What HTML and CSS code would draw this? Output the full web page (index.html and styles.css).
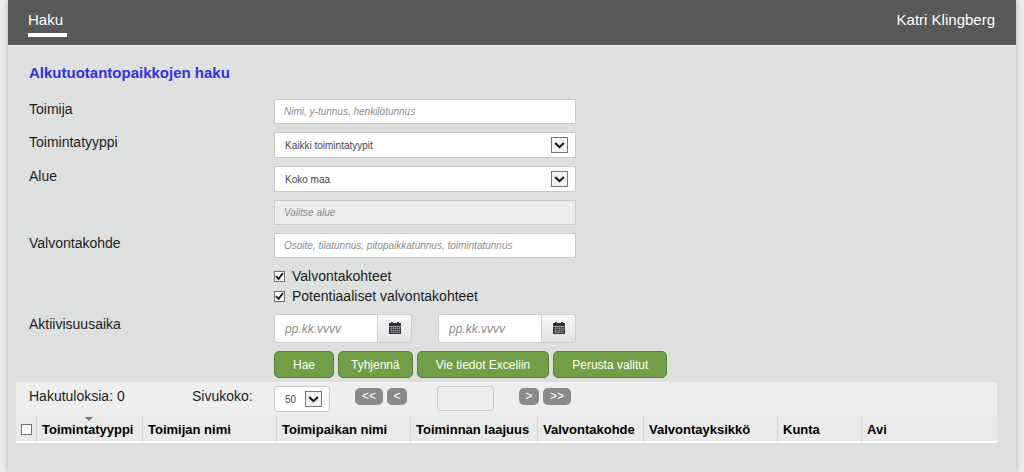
FILE: index.html
```html
<!DOCTYPE html>
<html lang="fi">
<head>
<meta charset="utf-8">
<title>Alkutuotantopaikkojen haku</title>
<link rel="stylesheet" href="styles.css">
</head>
<body>
<svg class="defs" aria-hidden="true">
  <symbol id="chevron" viewBox="0 0 15 14"><path d="M3.2 5 L7.5 9.2 L11.8 5" fill="none" stroke="#111" stroke-width="2"/></symbol>
  <symbol id="tick" viewBox="0 0 11 11"><path d="M2 5 L4.5 8 L9 2" fill="none" stroke="#111" stroke-width="1.8"/></symbol>
  <symbol id="calendar" viewBox="0 0 12 12">
    <path d="M0 1h2V0h2v1h4V0h2v1h2v3H0z" fill="#2e3033"/>
    <path d="M0 4.6h12V12H0z" fill="#303338"/>
    <path d="M1 6.5h10M1 8.5h10M1 10.5h10M2.5 5v6M4.5 5v6M6.5 5v6M8.5 5v6M10.5 5v6" stroke="#a5a8aa" stroke-width=".5"/>
  </symbol>
</svg>
<div class="page">
  <header class="topbar">
    <nav><a class="nav-link" href="#">Haku</a></nav>
    <span class="user">Katri Klingberg</span>
  </header>
  <main>
    <form class="search">
      <h1 class="title">Alkutuotantopaikkojen haku</h1>
      <div class="row">
        <label class="label" for="toimija">Toimija</label>
        <input class="field wide" id="toimija" type="text" placeholder="Nimi, y-tunnus, henkilötunnus">
      </div>
      <div class="row">
        <label class="label" for="tyyppi">Toimintatyyppi</label>
        <div class="select wide">
          <select id="tyyppi"><option>Kaikki toimintatyypit</option></select>
          <svg class="arrow"><use href="#chevron"/></svg>
        </div>
      </div>
      <div class="row">
        <label class="label" for="alue">Alue</label>
        <div class="select wide">
          <select id="alue"><option>Koko maa</option></select>
          <svg class="arrow"><use href="#chevron"/></svg>
        </div>
      </div>
      <div class="row">
        <span></span>
        <input class="field wide" type="text" placeholder="Valitse alue" aria-label="Valitse alue" disabled>
      </div>
      <div class="row">
        <label class="label" for="kohde">Valvontakohde</label>
        <input class="field wide" id="kohde" type="text" placeholder="Osoite, tilatunnus, pitopaikkatunnus, toimintatunnus">
      </div>
      <div class="row">
        <span></span>
        <div>
          <label class="check"><span class="box"><input type="checkbox" checked><svg class="tick"><use href="#tick"/></svg></span>Valvontakohteet</label>
          <label class="check"><span class="box"><input type="checkbox" checked><svg class="tick"><use href="#tick"/></svg></span>Potentiaaliset valvontakohteet</label>
        </div>
      </div>
      <div class="row">
        <label class="label" for="alku">Aktiivisuusaika</label>
        <div class="dates wide">
          <div class="date">
            <input id="alku" type="text" placeholder="pp.kk.vvvv">
            <button type="button" aria-label="Valitse alkupäivä"><svg class="calendar"><use href="#calendar"/></svg></button>
          </div>
          <div class="date">
            <input type="text" placeholder="pp.kk.vvvv" aria-label="Loppupäivä">
            <button type="button" aria-label="Valitse loppupäivä"><svg class="calendar"><use href="#calendar"/></svg></button>
          </div>
        </div>
      </div>
      <div class="row">
        <span></span>
        <div class="actions">
          <button class="btn" type="button">Hae</button>
          <button class="btn tight" type="button">Tyhjennä</button>
          <button class="btn" type="button">Vie tiedot Exceliin</button>
          <button class="btn" type="button">Perusta valitut</button>
        </div>
      </div>
    </form>
    <section class="results">
      <div class="pager">
        <span>Hakutuloksia: 0</span>
        <label for="koko">Sivukoko:</label>
        <div class="select size">
          <select id="koko"><option>50</option></select>
          <svg class="arrow"><use href="#chevron"/></svg>
        </div>
        <div class="steps">
          <button class="step far" type="button">&lt;&lt;</button>
          <button class="step" type="button">&lt;</button>
        </div>
        <input class="field page-no" type="text" aria-label="Sivu" disabled>
        <div class="steps">
          <button class="step" type="button">&gt;</button>
          <button class="step far" type="button">&gt;&gt;</button>
        </div>
      </div>
      <table class="grid">
        <colgroup>
          <col class="c-check"><col class="c-type"><col class="c-name"><col class="c-name"><col class="c-scope"><col class="c-type"><col class="c-name"><col class="c-town"><col>
        </colgroup>
        <thead>
          <tr>
            <th><span class="box"><input type="checkbox" aria-label="Valitse kaikki"></span></th>
            <th class="sorted">Toimintatyyppi</th>
            <th>Toimijan nimi</th>
            <th>Toimipaikan nimi</th>
            <th>Toiminnan laajuus</th>
            <th>Valvontakohde</th>
            <th>Valvontayksikkö</th>
            <th>Kunta</th>
            <th>Avi</th>
          </tr>
        </thead>
      </table>
    </section>
  </main>
</div>
</body>
</html>
```
FILE: styles.css
```css
* { box-sizing: border-box; }
body {
  margin: 0;
  padding: 0 8px;
  background: #eeeeee;
  color: #1c1c1c;
  font-family: "Liberation Sans", Arial, sans-serif;
  font-size: 14px;
  line-height: 20px;
}
input, select, button { margin: 0; font-family: inherit; font-size: 12px; }
.defs { display: none; }
.page {
  min-height: 100vh;
  background: #dee0df;
  box-shadow: 0 0 6px #aaaaaa;
}
.topbar {
  display: flex;
  justify-content: space-between;
  padding: 10px 21px 8px 20px;
  border-bottom: 1px solid #eeeeee;
  background: #585858;
  color: #ffffff;
  font-size: 15px;
}
.nav-link {
  display: block;
  width: 39px;
  padding-bottom: 3px;
  border-bottom: 4px solid #ffffff;
  color: #ffffff;
  text-decoration: none;
}
.search {
  display: flex;
  flex-direction: column;
  gap: 8px;
  padding: 17px 21px 4px;
}
.title {
  margin: 0 0 8px;
  color: #3330e0;
  font-size: 15px;
  line-height: 20px;
}
.row {
  display: grid;
  grid-template-columns: 245px 1fr;
  align-items: start;
}
.wide { width: 100%; max-width: 302px; }
.field {
  height: 25px;
  padding: 0 9px;
  border: 1px solid #c8c8c8;
  background: #ffffff;
  font-size: 10px;
}
.field:disabled { background: #ededed; }
::placeholder { color: #8c8c8c; font-style: italic; opacity: 1; }
.select { position: relative; height: 26px; }
.select select {
  width: 100%;
  height: 100%;
  padding: 0 10px;
  appearance: none;
  border: 1px solid #c8c8c8;
  border-radius: 0;
  background: #ffffff;
  color: #444444;
  font-size: 10px;
}
.arrow {
  position: absolute;
  top: 5px;
  right: 8px;
  width: 17px;
  height: 16px;
  border: 1px solid #777777;
  background: #f2f2f2;
  pointer-events: none;
}
.check { display: flex; align-items: center; gap: 7px; }
.box { display: block; position: relative; width: 11px; height: 11px; }
.box input {
  display: block;
  width: 11px;
  height: 11px;
  appearance: none;
  border: 1px solid #707070;
  background: #ffffff;
}
.tick { position: absolute; inset: 0; width: 11px; height: 11px; display: none; }
.box input:checked + .tick { display: block; }
.dates { display: flex; justify-content: space-between; }
.date { display: flex; width: 138px; height: 29px; }
.date input {
  flex: 1;
  min-width: 0;
  padding: 0 10px;
  border: 1px solid #cccccc;
  border-radius: 3px 0 0 3px;
  background: #ffffff;
}
.date button {
  display: flex;
  align-items: center;
  justify-content: center;
  width: 34px;
  padding: 0 0 2px;
  border: 1px solid #cccccc;
  border-left: 0;
  border-radius: 0 3px 3px 0;
  background: linear-gradient(#f8f8f8, #e2e2e5);
}
.calendar { width: 12px; height: 12px; }
.actions { display: flex; gap: 4px; }
.btn {
  height: 27px;
  padding: 0 18px;
  border: 1px solid #5c7d3e;
  border-radius: 5px;
  background: #729e45;
  color: #ffffff;
}
.tight { padding: 0 12px; }
.results { margin: 0 19px 0 8px; }
.pager {
  display: grid;
  grid-template-columns: 163px 82px 81px 82px 82px 1fr;
  align-items: start;
  padding: 4px 0 4px 13px;
  background: #eeeeee;
}
.size { width: 56px; }
.size select { border-radius: 3px; }
.steps { display: flex; gap: 4px; padding-top: 2px; }
.step {
  width: 20px;
  height: 17px;
  padding: 0;
  border: 0;
  border-radius: 5px;
  background: #8a8a8a;
  color: #ffffff;
  line-height: 17px;
}
.far { width: 28px; }
.page-no { width: 57px; border-radius: 3px; }
.grid {
  width: 100%;
  border-collapse: separate;
  border-spacing: 0;
  table-layout: fixed;
  background: #e9e9e9;
}
.grid th {
  position: relative;
  height: 27px;
  padding: 2px 5px 0;
  border-right: 1px solid #d2d5d5;
  border-bottom: 2px solid #ffffff;
  color: #000000;
  text-align: left;
  white-space: nowrap;
  font-size: 13px;
}
.grid th:last-child { border-right: 0; }
.sorted::before {
  content: "";
  position: absolute;
  top: 1px;
  left: 48px;
  border: 4px solid transparent;
  border-top-color: #777777;
  border-bottom: 0;
}
.c-check { width: 21px; }
.c-type { width: 106px; }
.c-name { width: 134px; }
.c-scope { width: 127px; }
.c-town { width: 84px; }
```
